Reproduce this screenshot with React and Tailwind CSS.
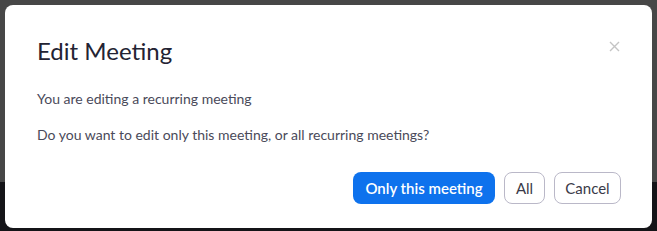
import React from "react";

export default function App() {
  return (
    <div className="relative w-[657px] h-[231px] overflow-hidden" style={{ fontFamily: "Lato, 'Open Sans', sans-serif" }}>
      <div className="flex flex-col h-full">
        <div className="h-[182px] bg-[#474747]" />
        <div className="flex-1 bg-[#141418]" />
      </div>
      <div className="absolute left-[5px] top-[5px] w-[647px] h-[223px] bg-white rounded-[8px] flex flex-col pl-[32px] pr-[31px]">
        <div className="flex items-start justify-between pt-[29px]">
          <h1 className="text-[24px] leading-[34px] text-[#232333] font-normal">Edit Meeting</h1>
          <button className="mt-[7px] mr-[1px] text-[#c4c4c4]">
            <svg width="11" height="11" viewBox="0 0 11 11" fill="none" stroke="currentColor" strokeWidth="1.4">
              <path d="M1 1L10 10M10 1L1 10" />
            </svg>
          </button>
        </div>
        <p className="mt-[21px] text-[14px] leading-[20px] text-[#4a4a5a]">You are editing a recurring meeting</p>
        <p className="mt-[16px] text-[14px] leading-[20px] text-[#4a4a5a]">Do you want to edit only this meeting, or all recurring meetings?</p>
        <div className="flex justify-end gap-[9px] mt-[27px]">
          <button className="h-[32px] w-[142px] rounded-[8px] bg-[#0e72ed] text-white text-[15px] font-semibold">Only this meeting</button>
          <button className="h-[32px] w-[41px] rounded-[8px] border border-[#bab8c8] text-[#3a3a48] text-[15px]">All</button>
          <button className="h-[32px] w-[67px] rounded-[8px] border border-[#bab8c8] text-[#3a3a48] text-[15px]">Cancel</button>
        </div>
      </div>
    </div>
  );
}
